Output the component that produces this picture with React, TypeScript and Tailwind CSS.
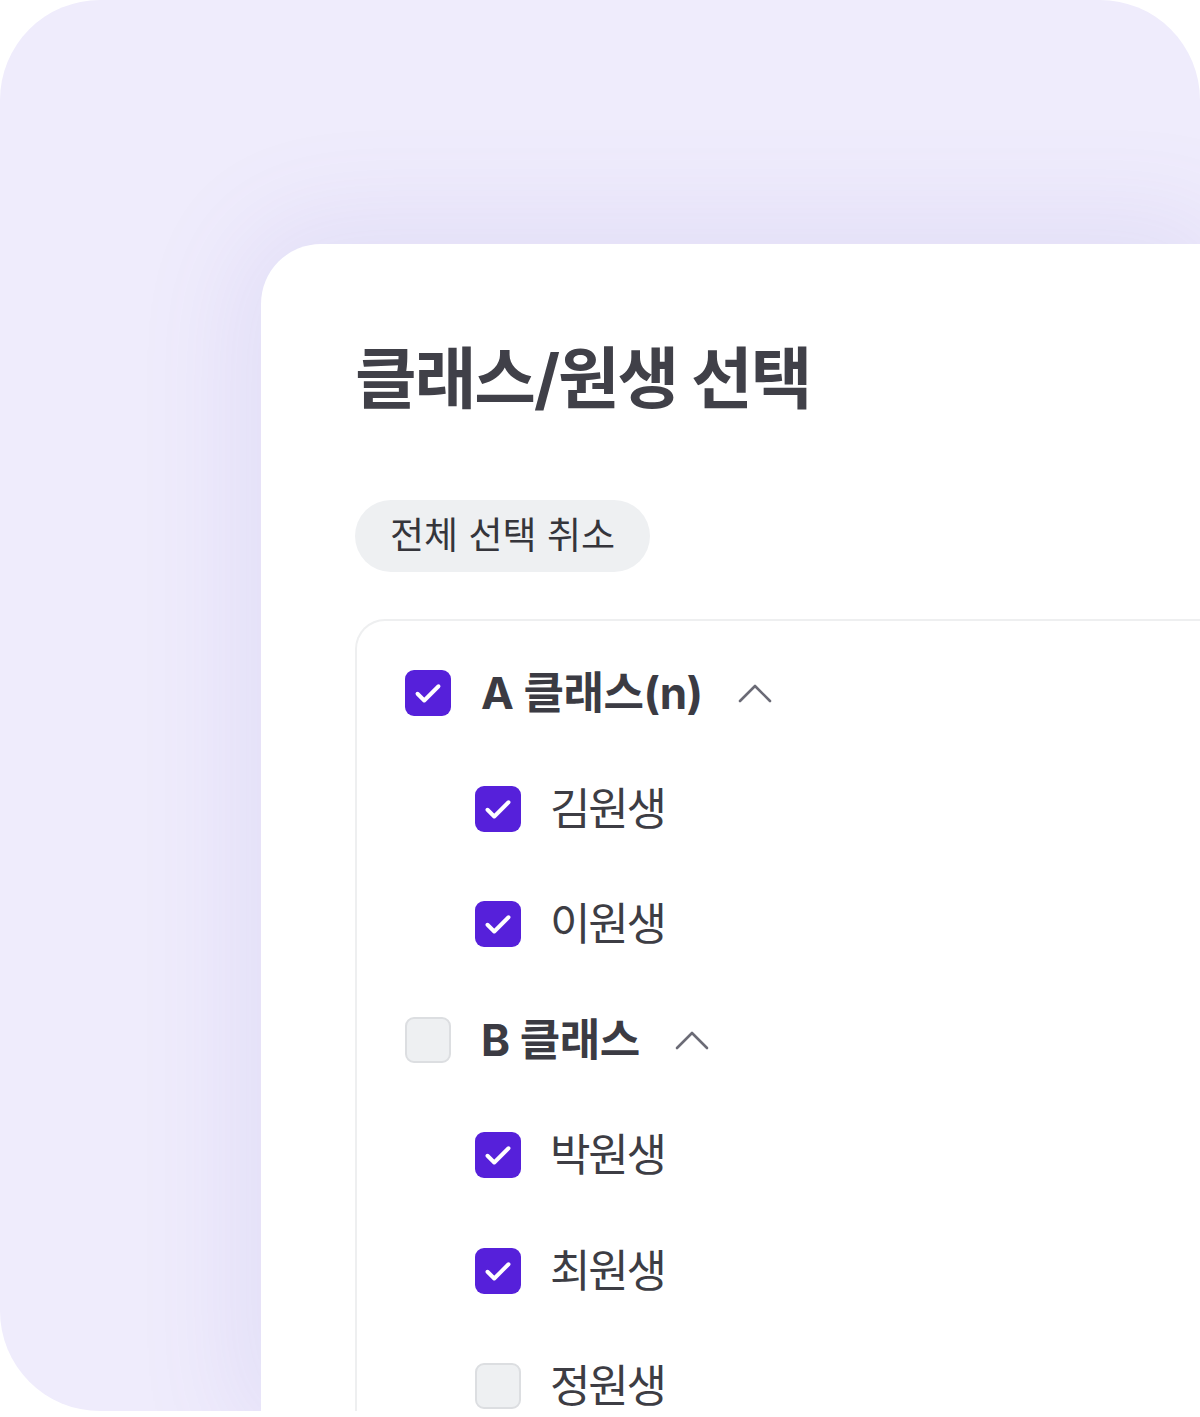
const font = { fontFamily: 'Inter, "Noto Sans CJK KR", sans-serif' };

function CheckIcon() {
  return (
    <svg viewBox="0 0 24 24" className="h-[36px] w-[36px]" fill="none">
      <path d="M5 12.5l4.5 4.5L19 7.5" stroke="#ffffff" strokeWidth="2.6" strokeLinecap="round" strokeLinejoin="round" />
    </svg>
  );
}

function Checkbox({ checked }: { checked: boolean }) {
  return checked ? (
    <span className="flex h-[46px] w-[46px] shrink-0 items-center justify-center rounded-[9px] bg-[#5620da]">
      <CheckIcon />
    </span>
  ) : (
    <span className="h-[46px] w-[46px] shrink-0 rounded-[9px] border-2 border-[#dcdee1] bg-[#eef0f2]" />
  );
}

function Chevron() {
  return (
    <svg viewBox="0 0 34 20" className="h-[20px] w-[34px]" fill="none">
      <path d="M2 18L17 3l15 15" stroke="#6b6b76" strokeWidth="2.6" strokeLinecap="round" strokeLinejoin="round" />
    </svg>
  );
}

function ClassRow({ label, checked }: { label: string; checked: boolean }) {
  return (
    <div className="flex h-[46px] items-center">
      <Checkbox checked={checked} />
      <span className="ml-[30px] text-[44px] font-bold tracking-[-0.01em] text-[#3b3b43]">{label}</span>
      <span className="ml-[35px] flex items-center">
        <Chevron />
      </span>
    </div>
  );
}

function StudentRow({ name, checked }: { name: string; checked: boolean }) {
  return (
    <div className="flex h-[46px] items-center pl-[70px]">
      <Checkbox checked={checked} />
      <span className="ml-[29px] text-[44px] tracking-[-0.05em] text-[#3d3d44]">{name}</span>
    </div>
  );
}

export default function App() {
  return (
    <div className="h-[1417px] w-[1200px] overflow-hidden bg-white" style={font}>
      <div className="flex h-[1411px] w-[1200px] flex-col overflow-hidden rounded-t-[100px] rounded-bl-[100px] bg-[#efecfc] pl-[261px] pt-[244px]">
        <div className="flex flex-1 flex-col rounded-tl-[60px] bg-white pl-[94px] pt-[95px] shadow-[0_0_110px_20px_rgba(110,90,200,0.10)]">
          <h1 className="text-[67px] font-bold leading-[80px] tracking-[-0.03em] text-[#404048]">클래스/원생 선택</h1>
          <div className="mt-[81px]">
            <button className="h-[72px] rounded-full bg-[#eef0f2] px-[35px] text-[37px] text-[#35353b]">
              전체 선택 취소
            </button>
          </div>
          <div className="mt-[47px] flex flex-1 flex-col gap-[69.5px] rounded-tl-[30px] border-l-2 border-t-2 border-[#eeeff0] pl-[48px] pt-[49px]">
            <ClassRow label="A 클래스(n)" checked />
            <StudentRow name="김원생" checked />
            <StudentRow name="이원생" checked />
            <ClassRow label="B 클래스" checked={false} />
            <StudentRow name="박원생" checked />
            <StudentRow name="최원생" checked />
            <StudentRow name="정원생" checked={false} />
          </div>
        </div>
      </div>
    </div>
  );
}
